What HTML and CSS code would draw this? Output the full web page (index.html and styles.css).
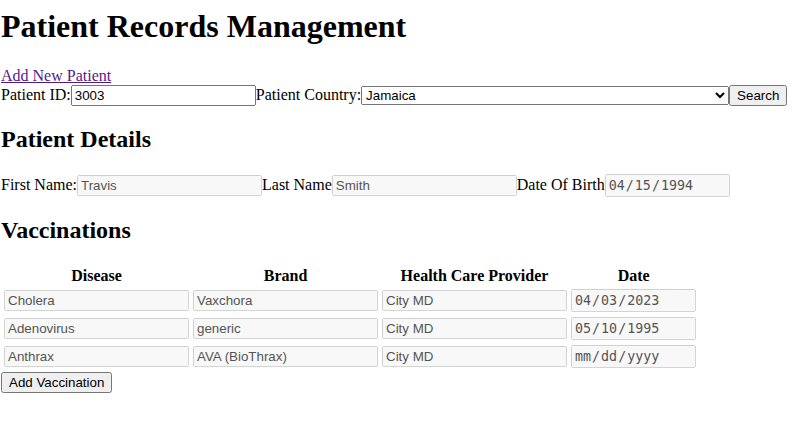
FILE: index.html
```html
<!DOCTYPE html>
<html lang="en">
<head>
<meta charset="utf-8">
<title>Patient Records Management</title>
<link rel="stylesheet" href="styles.css">
</head>
<body class="page">
<h1 class="title">Patient Records Management</h1>
<a class="add-link" href="#">Add New Patient</a>
<div class="search-row">
  <label class="lbl" for="pid">Patient ID:</label><input id="pid" class="field" type="text" value="3003"><label class="lbl" for="country">Patient Country:</label><select id="country" class="country"><option>Jamaica</option></select><button class="btn" type="button">Search</button>
</div>

<h2 class="section">Patient Details</h2>
<div class="details-row">
  <label class="lbl">First Name:</label><input class="field" type="text" value="Travis" disabled><label class="lbl">Last Name</label><input class="field" type="text" value="Smith" disabled><label class="lbl">Date Of Birth</label><input class="field date-field" type="date" value="1994-04-15" disabled>
</div>

<h2 class="section">Vaccinations</h2>
<table class="vacc">
  <thead>
    <tr><th class="hd">Disease</th><th class="hd">Brand</th><th class="hd">Health Care Provider</th><th class="hd">Date</th></tr>
  </thead>
  <tbody>
    <tr>
      <td class="cell"><input class="field" type="text" value="Cholera" disabled></td>
      <td class="cell"><input class="field" type="text" value="Vaxchora" disabled></td>
      <td class="cell"><input class="field" type="text" value="City MD" disabled></td>
      <td class="cell"><input class="field date-field" type="date" value="2023-04-03" disabled></td>
    </tr>
    <tr>
      <td class="cell"><input class="field" type="text" value="Adenovirus" disabled></td>
      <td class="cell"><input class="field" type="text" value="generic" disabled></td>
      <td class="cell"><input class="field" type="text" value="City MD" disabled></td>
      <td class="cell"><input class="field date-field" type="date" value="1995-05-10" disabled></td>
    </tr>
    <tr>
      <td class="cell"><input class="field" type="text" value="Anthrax" disabled></td>
      <td class="cell"><input class="field" type="text" value="AVA (BioThrax)" disabled></td>
      <td class="cell"><input class="field" type="text" value="City MD" disabled></td>
      <td class="cell"><input class="field date-field" type="date" disabled></td>
    </tr>
  </tbody>
</table>
<button class="btn" type="button">Add Vaccination</button>
</body>
</html>
```
FILE: styles.css
```css
.page {
  margin: 0;
  padding: 1px 0 0 1px;
  font-family: "Liberation Serif", "Times New Roman", serif;
  font-size: 16px;
  color: #000;
  background: #fff;
}
.title {
  font-size: 32px;
  font-weight: bold;
  margin: 7px 0 22.44px;
}
.add-link {
  display: block;
  color: #551a8b;
  text-decoration: underline;
}
.section {
  font-size: 24px;
  font-weight: bold;
  margin: 19.92px 0;
}
.details-row {
  padding-top: 1px;
}
.country {
  width: 368px;
}
.date-field {
  box-sizing: border-box;
  height: 23px;
  padding-top: 2px;
  padding-bottom: 2px;
}
.vacc {
  border-spacing: 2px;
}
.hd {
  font-weight: bold;
  text-align: center;
}
.cell {
  padding: 1px 1px 2px;
}
```
